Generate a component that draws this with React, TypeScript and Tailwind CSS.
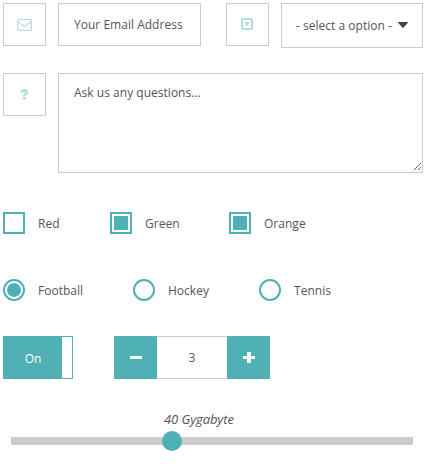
import type { ReactNode } from "react";

function IconBox({ children }: { children: ReactNode }) {
  return (
    <div className="flex h-[43px] w-[43px] shrink-0 items-center justify-center border border-[#ccc] text-[#b5dcdf]">
      {children}
    </div>
  );
}

function Check({ label, checked, className }: { label: string; checked?: boolean; className: string }) {
  return (
    <label className={`flex items-center gap-[13px] ${className}`}>
      <span className="h-[22px] w-[22px] border-2 border-[#4fb0b6] p-[2px]">
        {checked && <span className="block h-[14px] w-[14px] bg-[#4fb0b6]" />}
      </span>
      <span className="-mb-[2px]">{label}</span>
    </label>
  );
}

function Radio({ label, checked, className }: { label: string; checked?: boolean; className: string }) {
  return (
    <label className={`flex items-center gap-[13px] ${className}`}>
      <span className="h-[22px] w-[22px] rounded-full border-2 border-[#4fb0b6] p-[2px]">
        {checked && <span className="block h-[14px] w-[14px] rounded-full bg-[#4fb0b6]" />}
      </span>
      <span className="-mb-[2px]">{label}</span>
    </label>
  );
}

export default function App() {
  return (
    <div className="h-[464px] w-[425px] overflow-hidden bg-white pt-[3px] pl-[3px] font-['Open_Sans',sans-serif] text-[12px] leading-[22px] tracking-[0.02px] text-[#555]">
      <div className="flex h-[70px] items-start">
        <IconBox>
          <svg width="15" height="13" viewBox="0 0 15 13" fill="none" stroke="currentColor" strokeWidth="1.2">
            <rect x="0.6" y="1.5" width="13.8" height="10.9" rx="1" />
            <path d="M.8 3.2C2.5 5.1 4.2 6.2 5.8 7.5C7 8.4 8 8.4 9.2 7.5C10.8 6.2 12.5 5.1 14.2 3.2" />
          </svg>
        </IconBox>
        <div className="ml-3 flex h-[43px] w-[143px] items-center border border-[#ccc] pl-[15px] whitespace-nowrap">
          Your Email Address
        </div>
        <div className="ml-[25px] flex">
          <IconBox>
            <svg width="13" height="13" viewBox="0 0 13 13">
              <rect x="1" y="1" width="10" height="10" rx="1" fill="none" stroke="currentColor" strokeWidth="2" />
              <path d="M3 4H9L6 8.5Z" fill="currentColor" />
            </svg>
          </IconBox>
        </div>
        <div className="ml-3 flex h-[45px] w-[142px] items-center border border-[#ccc] pl-[14px] whitespace-nowrap">
          <span className="w-[96px] pt-px">- select a option -</span>
          <svg className="mb-px ml-[5px]" width="12" height="6" viewBox="0 0 12 6">
            <path d="M.5 0H11.5L6.5 5.7Q6 6 5.5 5.7Z" fill="#444" />
          </svg>
        </div>
      </div>

      <div className="flex h-[139px] items-start">
        <IconBox>
          <svg width="9" height="11" viewBox="0 0 9 11">
            <path d="M1.2 3.2Q2 1.4 4.3 1.4Q6.8 1.5 6.8 3.2Q6.8 4.2 5.4 4.9Q4.4 5.4 4.4 6.9" fill="none" stroke="currentColor" strokeWidth="2.7" />
            <rect x="3" y="8" width="3" height="2.6" fill="currentColor" />
          </svg>
        </IconBox>
        <div className="ml-3 flex h-[100px] w-[365px] justify-between border border-[#ccc] pt-[8px] pl-[15px]">
          <span>Ask us any questions...</span>
          <svg className="mr-px mb-px self-end" width="8" height="8" viewBox="0 0 8 8" shapeRendering="crispEdges" stroke="#666">
            <path d="M.5 7.5L7.5 .5M4.5 7.5L7.5 4.5" />
          </svg>
        </div>
      </div>

      <div className="flex h-[67px] items-start">
        <Check label="Red" className="w-[107px]" />
        <Check label="Green" checked className="w-[119px]" />
        <Check label="Orange" checked className="" />
      </div>
      <div className="flex h-[57px] items-start">
        <Radio label="Football" checked className="w-[130px]" />
        <Radio label="Hockey" className="w-[126px]" />
        <Radio label="Tennis" className="" />
      </div>

      <div className="flex h-[43px]">
        <div className="flex w-[70px] border border-[#4fb0b6]">
          <span className="flex w-[58px] items-center justify-center bg-[#4fb0b6] pt-[2px] text-white">On</span>
        </div>
        <div className="ml-[41px] flex w-[156px]">
          <button className="flex w-[43px] items-center justify-center bg-[#4fb0b6]">
            <svg width="13" height="11" viewBox="0 0 13 11"><path d="M1 4H13V7H1Z" fill="white" /></svg>
          </button>
          <span className="flex w-[70px] items-center justify-center border-y border-[#ccc]">3</span>
          <button className="flex w-[43px] items-center justify-center bg-[#4fb0b6]">
            <svg width="13" height="11" viewBox="0 0 13 11"><path d="M1 4H5V0H9V4H13V7H9V11H5V7H1Z" fill="white" /></svg>
          </button>
        </div>
      </div>

      <div className="mt-[29px] mb-px ml-[161px] text-[13px] tracking-[-0.1px] whitespace-nowrap italic">40 Gygabyte</div>
      <div className="ml-2 flex h-5 w-[402px] items-center bg-[linear-gradient(#ccc,#ccc)] bg-[length:100%_8px] bg-center bg-no-repeat">
        <span className="ml-[151px] h-5 w-5 rounded-full bg-[#4fb0b6]" />
      </div>
    </div>
  );
}
